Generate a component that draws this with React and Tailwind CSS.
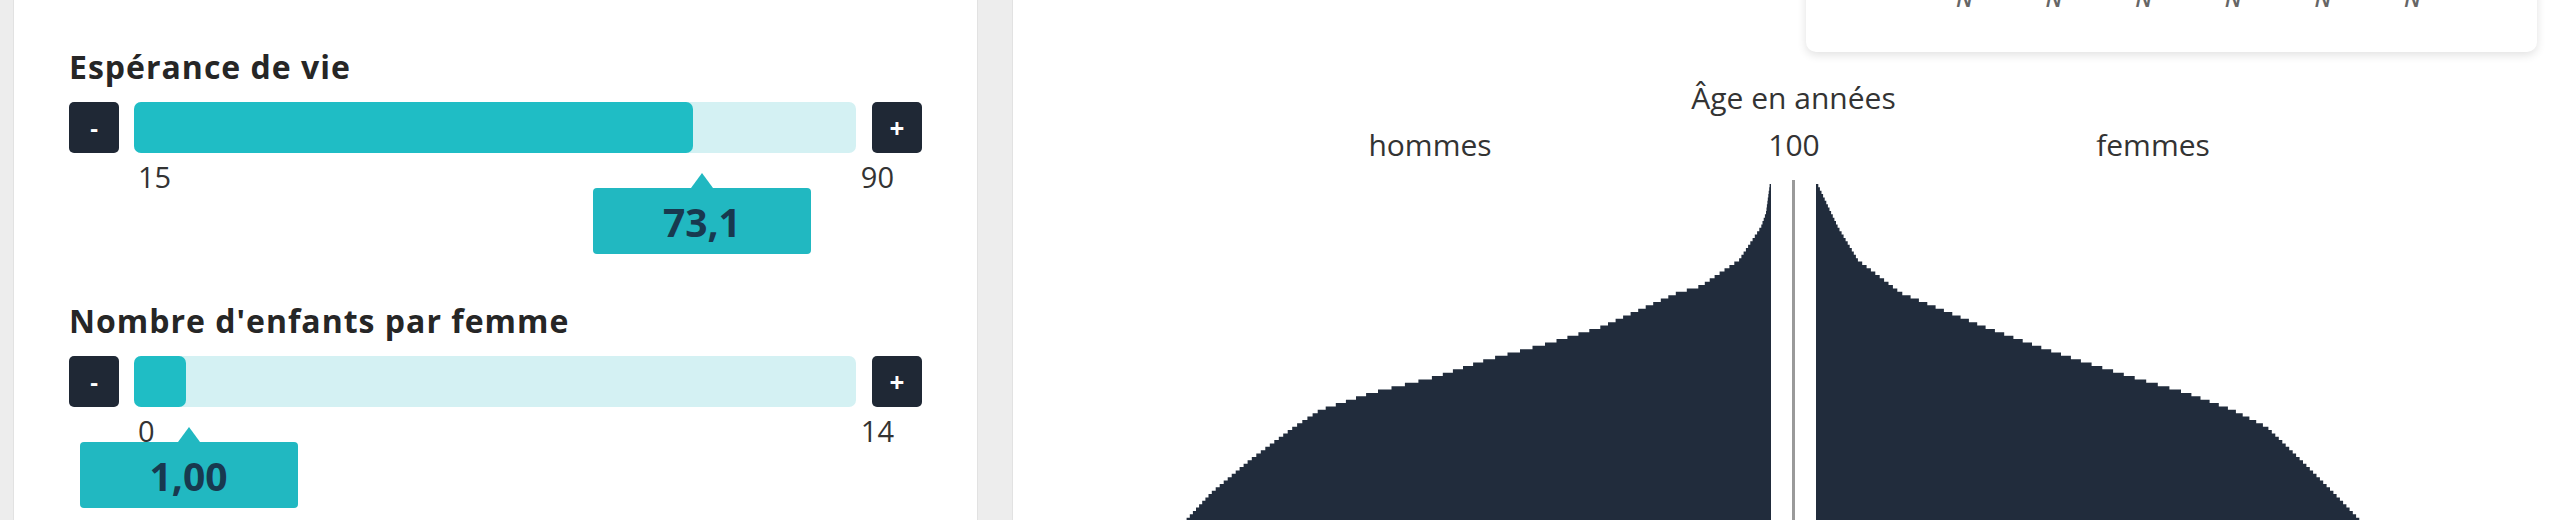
import React from 'react';

const LEFT_EDGE = [
  [183, 1769], [213, 1765], [227, 1760], [245, 1748], [260, 1738], [286, 1700], [293, 1676],
  [327, 1600], [343, 1548], [360, 1485], [377, 1434], [393, 1370], [410, 1319], [427, 1293],
  [460, 1249], [493, 1210], [520, 1185], [560, 1160],
];
const RIGHT_EDGE = [
  [183, 1816], [227, 1837], [260, 1857], [293, 1900], [327, 1984], [347, 2039], [360, 2077],
  [377, 2131], [393, 2186], [410, 2232], [427, 2266], [460, 2300], [493, 2333], [520, 2359],
  [560, 2380],
];

const CARD_X = 1012;
const SVG_Y = 180;

function interp(pts, y) {
  if (y <= pts[0][0]) return pts[0][1];
  for (let i = 1; i < pts.length; i++) {
    const [y0, x0] = pts[i - 1];
    const [y1, x1] = pts[i];
    if (y <= y1) return x0 + ((y - y0) / (y1 - y0)) * (x1 - x0);
  }
  return pts[pts.length - 1][1];
}

// one step per age, stacked from 100 down
function stairs(side) {
  const step = 3.37;
  const inner = side === 'left' ? 758 : 803;
  let d = `M ${inner} ${184 - SVG_Y}`;
  for (let i = 0; i < 110; i++) {
    const y0 = 184 + i * step;
    const y1 = y0 + step;
    const edge = interp(side === 'left' ? LEFT_EDGE : RIGHT_EDGE, y0 + step / 2) - CARD_X;
    d += ` L ${edge.toFixed(1)} ${(y0 - SVG_Y).toFixed(2)} L ${edge.toFixed(1)} ${(y1 - SVG_Y).toFixed(2)}`;
  }
  d += ` L ${inner} ${184 + 110 * step - SVG_Y} Z`;
  return d;
}

function Slider({ label, min, max, value, display }) {
  const trackW = 722;
  const pct = (value - min) / (max - min);
  const fill = pct * trackW;
  const tip = 2.4 + pct * 730;
  return (
    <div>
      <div className="h-[32px] text-[32px] leading-none font-bold tracking-[1px] text-[#262626]">
        {label}
      </div>
      <div className="mt-[19px] flex h-[51px] items-stretch gap-[15px]">
        <button className="flex w-[50px] items-center justify-center rounded-[5px] bg-[#1f2835] text-[24px] font-bold leading-none text-white">
          -
        </button>
        <div className="relative w-[722px] rounded-[7px] bg-[#d4f1f3]">
          <div className="h-full rounded-[7px] bg-[#1fbdc5]" style={{ width: fill }} />
        </div>
        <button className="ml-px flex w-[50px] items-center justify-center rounded-[5px] bg-[#1f2835] text-[26px] font-bold leading-none text-white">
          +
        </button>
      </div>
      <div className="relative ml-[65px] mt-[9px] flex h-[29px] w-[760px] justify-between pl-[4px] text-[29px] leading-none text-[#333]">
        <span>{min}</span>
        <span>{max}</span>
        <div className="absolute top-[11px] flex w-[218px] flex-col items-center" style={{ left: tip - 109 }}>
          <div className="h-0 w-0 border-x-[11px] border-b-[15px] border-x-transparent border-b-[#21b8c1]" />
          <div className="flex h-[66px] w-[218px] items-center justify-center rounded-[4px] bg-[#21b8c1] text-[39px] font-bold text-[#18394f]">
            {display}
          </div>
        </div>
      </div>
    </div>
  );
}

export default function App() {
  const ticks = [0, 1, 2, 3, 4, 5];
  return (
    <div className="flex h-[520px] w-[2560px] overflow-hidden bg-[#ededed] pl-[13px] [font-family:'Open_Sans','Liberation_Sans',sans-serif]">
      <div className="w-[965px] shrink-0 border-x border-[#e2e2e2] bg-white pl-[55px] pt-[51px]">
        <Slider label="Espérance de vie" min={15} max={90} value={73.1} display="73,1" />
        <div className="mt-[114px]">
          <Slider label="Nombre d'enfants par femme" min={0} max={14} value={1} display="1,00" />
        </div>
      </div>

      <div className="ml-[34px] w-[1562px] shrink-0 border-l border-[#e2e2e2] bg-white">
        <div className="-mt-[68px] ml-[793px] h-[120px] w-[731px] rounded-[10px] bg-white shadow-[0_3px_10px_rgba(0,0,0,0.12)]">
          <div className="flex pl-[150px] pt-[55px]">
            {ticks.map(t => (
              <span key={t} className="w-[89.6px] text-[23px] font-semibold italic leading-none text-[#666]">N</span>
            ))}
          </div>
        </div>

        <div className="mt-[31px] text-center text-[30px] leading-none text-[#333]">Âge en années</div>

        <div className="mt-[17px] flex text-[30px] leading-none text-[#333]">
          <span className="ml-[317px] w-[200px] text-center">hommes</span>
          <span className="ml-[164px] w-[200px] text-center">100</span>
          <span className="ml-[159px] w-[200px] text-center">femmes</span>
        </div>

        <svg className="mt-[20px] block" width="1562" height="360" viewBox="0 0 1562 360">
          <rect x="779" y="0" width="3" height="360" fill="#9a9a9a" />
          <path d={stairs('left')} fill="#212c3c" />
          <path d={stairs('right')} fill="#212c3c" />
        </svg>
      </div>
    </div>
  );
}
